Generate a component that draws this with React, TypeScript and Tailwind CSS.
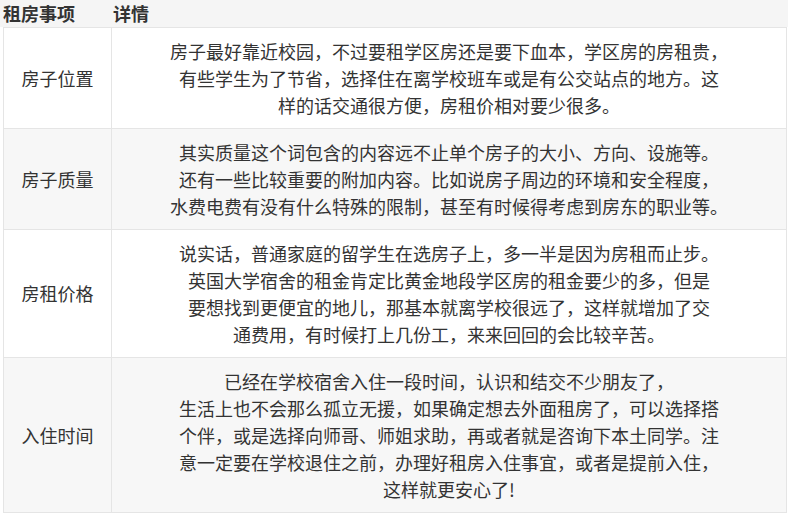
const rows = [
    {
        name: "房子位置",
        h: "h-[101px]",
        bg: "bg-white",
        lines: [
            "房子最好靠近校园，不过要租学区房还是要下血本，学区房的房租贵，",
            "有些学生为了节省，选择住在离学校班车或是有公交站点的地方。这",
            "样的话交通很方便，房租价相对要少很多。",
        ],
    },
    {
        name: "房子质量",
        h: "h-[101px]",
        bg: "bg-[#f7f7f7]",
        lines: [
            "其实质量这个词包含的内容远不止单个房子的大小、方向、设施等。",
            "还有一些比较重要的附加内容。比如说房子周边的环境和安全程度，",
            "水费电费有没有什么特殊的限制，甚至有时候得考虑到房东的职业等。",
        ],
    },
    {
        name: "房租价格",
        h: "h-[128px]",
        bg: "bg-white",
        lines: [
            "说实话，普通家庭的留学生在选房子上，多一半是因为房租而止步。",
            "英国大学宿舍的租金肯定比黄金地段学区房的租金要少的多，但是",
            "要想找到更便宜的地儿，那基本就离学校很远了，这样就增加了交",
            "通费用，有时候打上几份工，来来回回的会比较辛苦。",
        ],
    },
    {
        name: "入住时间",
        h: "h-[154px]",
        bg: "bg-[#f7f7f7]",
        lines: [
            "已经在学校宿舍入住一段时间，认识和结交不少朋友了，",
            "生活上也不会那么孤立无援，如果确定想去外面租房了，可以选择搭",
            "个伴，或是选择向师哥、师姐求助，再或者就是咨询下本土同学。注",
            "意一定要在学校退住之前，办理好租房入住事宜，或者是提前入住，",
            "这样就更安心了!",
        ],
    },
];

const App = () => {
    return <div className="w-[788px] h-[517px] bg-white text-[#333] text-[18px] font-['Microsoft_YaHei','Noto_Sans_CJK_SC',sans-serif]">
        <div className="flex items-center h-[27px] bg-[#f5f5f5] font-bold leading-[27px]">
            <div className="w-[111px] pl-[3px]">租房事项</div>
            <div className="pl-[2px]">详情</div>
        </div>
        <div className="ml-[3px] w-[784px] border border-[#e5e5e5]">
            {rows.map((r, i) => (
                <div key={r.name} className={`flex ${r.h} ${r.bg} ${i < rows.length - 1 ? "border-b border-[#e5e5e5]" : ""}`}>
                    <div className="w-[108px] shrink-0 flex items-center justify-center border-r border-[#e5e5e5] leading-[27px]">
                        {r.name}
                    </div>
                    <div className="flex-1 flex flex-col items-center justify-center leading-[27px] whitespace-nowrap">
                        {r.lines.map((l) => <div key={l}>{l}</div>)}
                    </div>
                </div>
            ))}
        </div>
    </div>
}

export default App;
